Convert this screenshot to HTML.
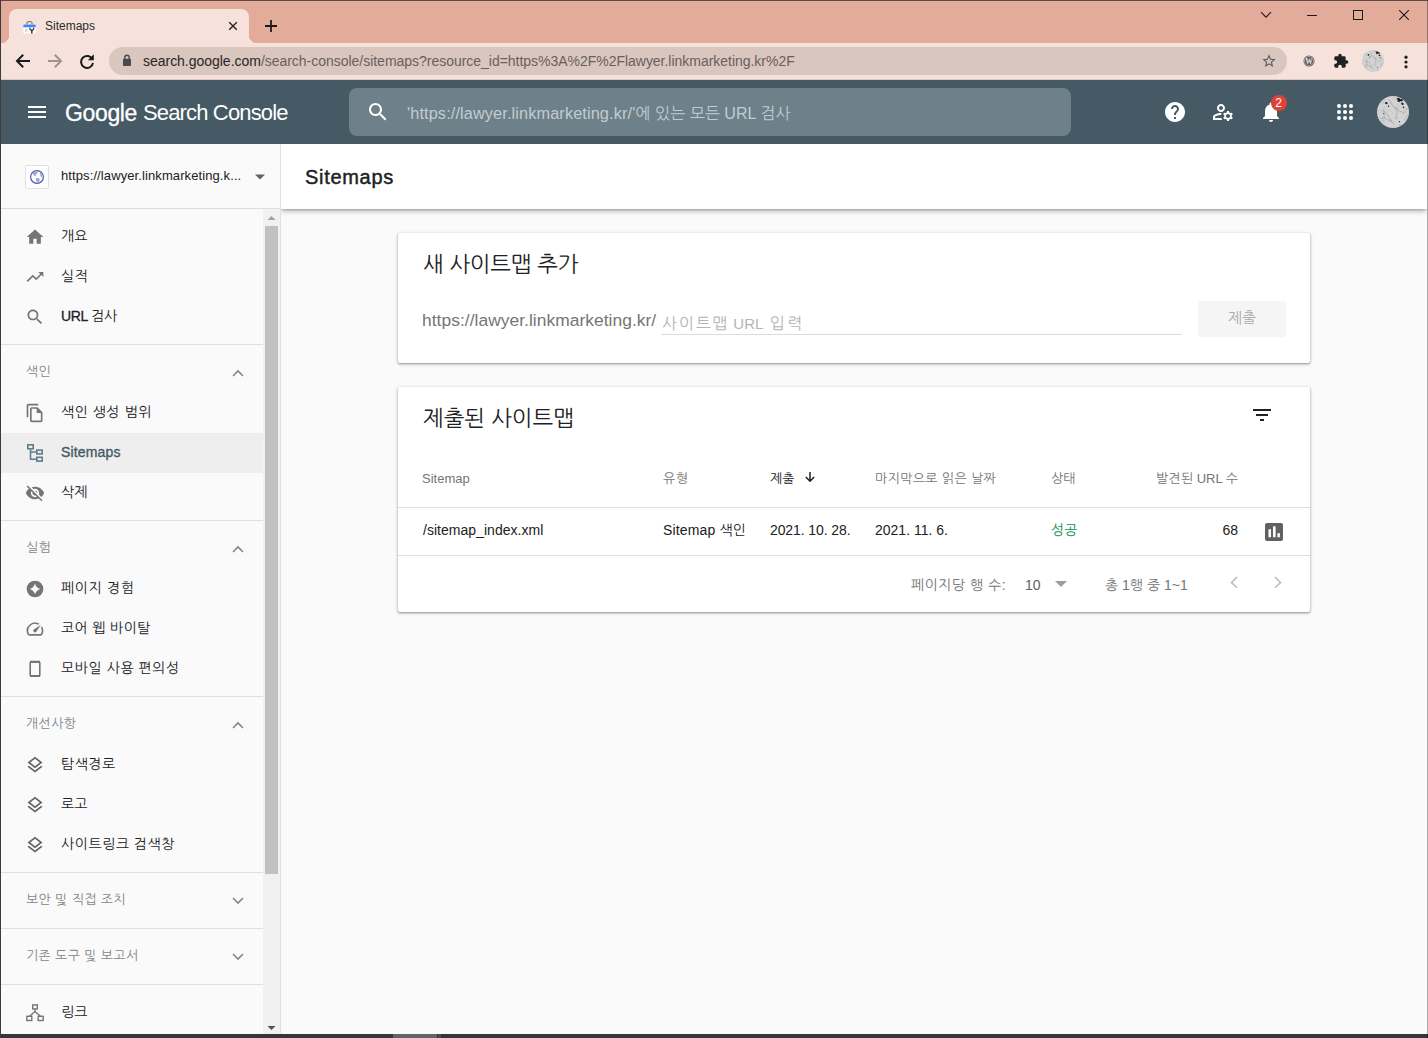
<!DOCTYPE html>
<html lang="ko">
<head>
<meta charset="utf-8">
<title>Sitemaps</title>
<style>
*{box-sizing:border-box;margin:0;padding:0}
html,body{width:1428px;height:1038px;overflow:hidden;background:#fafafa}
body{font-family:"Liberation Sans","NanumGothic","Noto Sans CJK KR",sans-serif;color:#202124;position:relative}
.abs{position:absolute}
svg{display:block}
/* ---------- window chrome ---------- */
#titlebar{left:0;top:0;width:1428px;height:43px;background:#e3ab99}
#tab{left:9px;top:9px;width:240px;height:34px;background:#f6e2db;border-radius:8px 8px 0 0}
#tab:before,#tab:after{content:"";position:absolute;bottom:0;width:8px;height:8px;background:radial-gradient(circle at 0 0,transparent 8px,#f6e2db 8.5px)}
#tab:before{left:-8px}
#tab:after{right:-8px;background:radial-gradient(circle at 100% 0,transparent 8px,#f6e2db 8.5px)}
#tabtitle{left:45px;top:18px;font-size:12px;line-height:16px;color:#2b2b2b}
#toolbar{left:0;top:43px;width:1428px;height:37px;background:#f6e2db}
#omni{left:109px;top:47px;width:1178px;height:28px;border-radius:14px;background:#d8c6bf}
#url{left:143px;top:53px;font-size:14px;line-height:16px;color:#6b5f5c;white-space:nowrap;letter-spacing:-0.025px}
#url b{font-weight:normal;color:#2a2524}
#wtop{left:0;top:0;width:1428px;height:1px;background:#5e4b47}
#wleft{left:0;top:0;width:1px;height:1038px;background:#3c3c3c}
#wright{left:1427px;top:0;width:1px;height:1038px;background:rgba(0,0,0,.32)}
#wbottom{left:0;top:1034px;width:1428px;height:4px;background:#363636}
/* ---------- GSC header ---------- */
#hdr{left:0;top:80px;width:1428px;height:64px;background:#455a64}
#logo{left:65px;top:99px;font-size:22px;line-height:28px;color:#fff;white-space:nowrap}
#search{left:349px;top:88px;width:722px;height:48px;border-radius:8px;background:#6e8089}
#searchtxt{left:407px;top:103px;font-size:16px;line-height:20px;color:#c3ccd0;white-space:nowrap}
/* ---------- sidebar ---------- */
#side{left:1px;top:144px;width:280px;height:889px;background:#fafafa;border-right:1px solid #e0e0e0}
.nav{position:absolute;left:61px;font-size:14px;line-height:20px;color:#202124;white-space:nowrap}
.sec{position:absolute;left:26px;letter-spacing:0.35px;font-size:13px;line-height:20px;color:#80868b;white-space:nowrap}
.hr{position:absolute;left:1px;width:262px;height:1px;background:#e0e0e0}
.ico{position:absolute;left:25px;width:20px;height:20px}
/* ---------- main ---------- */
#ptitle{left:281px;top:144px;width:1146px;height:65px;background:#fff;box-shadow:0 3px 5px -1px rgba(0,0,0,.3),0 1px 2px rgba(0,0,0,.15);clip-path:inset(0 0 -12px 0)}
#ptitle span{position:absolute;left:24px;top:20px;font-size:20px;line-height:26px;color:#202124;-webkit-text-stroke:0.45px #202124;letter-spacing:0.7px}
.card{position:absolute;background:#fff;border-radius:2px;box-shadow:0 1px 2px rgba(0,0,0,.3),0 1px 3px 1px rgba(0,0,0,.12)}
.t{position:absolute;white-space:nowrap}
.th{font-size:13px;line-height:16px;color:#757575;margin-top:1px}
.td{font-size:14px;line-height:20px;color:#212121}
.tf{font-size:14px;line-height:20px;color:#757575}
</style>
</head>
<body>
<!-- window chrome -->
<div id="titlebar" class="abs"></div>
<div id="toolbar" class="abs"></div>
<div class="abs" style="left:0;top:79px;width:1428px;height:1px;background:#d9c9c3"></div>
<div id="tab" class="abs"></div>
<div id="tabtitle" class="abs">Sitemaps</div>
<div id="omni" class="abs"></div>
<div id="url" class="abs"><b>search.google.com</b>/search-console/sitemaps?resource_id=https%3A%2F%2Flawyer.linkmarketing.kr%2F</div>

<!-- chrome icons -->
<svg class="abs" style="left:22.500px;top:20.500px" width="13" height="13" viewBox="0 0 13 13"><path d="M4 3.600v-1.800q0-1.100 1.100-1.100h2.800q1.100 0 1.100 1.100v1.800" fill="none" stroke="#5f6368" stroke-width="1"/><rect x="0.300" y="3.600" width="12.400" height="9" rx="0.800" fill="#fff"/><path d="M0.300 6.200v-1.800q0-.8.800-.8h10.800q.8 0 .8.800v1.800z" fill="#4285f4"/><rect x="2" y="7.300" width="2.600" height="4" fill="#dadce0"/><path d="M6.300 6.600v2l1.700 1.500v2.400h1.600v-2.400l1.700-1.500v-2h-1.200v1.700H7.500V6.600z" fill="#3c4043"/></svg>
<svg class="abs" style="left:227px;top:20.300px" width="12" height="12" viewBox="0 0 12 12"><path d="M2.200 2.200l7.600 7.600M9.800 2.200l-7.600 7.600" stroke="#2b2b2b" stroke-width="1.500" fill="none"/></svg>
<svg class="abs" style="left:264px;top:18.600px" width="14" height="14" viewBox="0 0 14 14"><path d="M7 1v12M1 7h12" stroke="#1b1b1b" stroke-width="1.800" fill="none"/></svg>
<!-- window controls -->
<svg class="abs" style="left:1260px;top:11px" width="12" height="8" viewBox="0 0 12 8"><path d="M1 1.200l5 5 5-5" stroke="#1b1b1b" stroke-width="1.100" fill="none"/></svg>
<div class="abs" style="left:1307px;top:15px;width:10px;height:1px;background:#1b1b1b"></div>
<div class="abs" style="left:1353px;top:10px;width:10px;height:10px;border:1px solid #1b1b1b"></div>
<svg class="abs" style="left:1399px;top:10px" width="10" height="10" viewBox="0 0 10 10"><path d="M0 0l10 10M10 0L0 10" stroke="#1b1b1b" stroke-width="1.100" fill="none"/></svg>
<!-- toolbar nav -->
<svg class="abs" style="left:15px;top:53px" width="16" height="16" viewBox="0 0 16 16"><path d="M15 8H2.500M8.200 1.800L2 8l6.200 6.200" stroke="#1b1b1b" stroke-width="2" fill="none"/></svg>
<svg class="abs" style="left:47px;top:53px" width="16" height="16" viewBox="0 0 16 16"><path d="M1 8h12.500M7.800 1.800L14 8l-6.200 6.200" stroke="#a0928f" stroke-width="2" fill="none"/></svg>
<svg class="abs" style="left:79px;top:53px" width="16" height="16" viewBox="0 0 16 16"><path d="M13.600 6.500A6 6 0 1 0 14 10" stroke="#1b1b1b" stroke-width="2" fill="none"/><path d="M14.800 1.200v6h-6z" fill="#1b1b1b"/></svg>
<svg class="abs" style="left:122px;top:54px" width="10" height="13" viewBox="0 0 10 13"><path d="M2.800 5V3.500a2.200 2.200 0 0 1 4.400 0V5" fill="none" stroke="#4a4a4e" stroke-width="1.400"/><rect x="1" y="4.800" width="8" height="7.200" rx="0.800" fill="#4a4a4e"/></svg>
<svg class="abs" style="left:1261px;top:53px" width="16" height="16" viewBox="0 0 24 24"><path fill="#5a5a5e" d="M22 9.240l-7.190-.62L12 2 9.190 8.630 2 9.240l5.460 4.730L5.820 21 12 17.270 18.180 21l-1.630-7.030L22 9.240zM12 15.400l-3.760 2.270 1-4.280-3.320-2.880 4.380-.38L12 6.100l1.710 4.040 4.380.38-3.320 2.880 1 4.280L12 15.400z"/></svg>
<svg class="abs" style="left:1303px;top:55px" width="12" height="12" viewBox="0 0 12 12"><circle cx="6" cy="6" r="5.500" fill="#5c5c5c"/><circle cx="6" cy="6" r="4.600" fill="none" stroke="#e6dad6" stroke-width="0.500"/><text x="6" y="8.700" font-size="7.500" font-weight="bold" font-family="Liberation Serif,serif" text-anchor="middle" fill="#efe4e0">W</text></svg>
<svg class="abs" style="left:1333px;top:53px" width="16" height="16" viewBox="0 0 24 24"><path fill="#202124" d="M20.500 11H19V7c0-1.100-.9-2-2-2h-4V3.500C13 2.120 11.880 1 10.500 1S8 2.120 8 3.500V5H4c-1.100 0-1.990.9-1.990 2v3.800H3.500c1.490 0 2.700 1.210 2.700 2.700s-1.210 2.700-2.700 2.700H2V20c0 1.100.9 2 2 2h3.800v-1.500c0-1.490 1.210-2.700 2.700-2.700 1.490 0 2.700 1.210 2.700 2.700V22H17c1.100 0 2-.9 2-2v-4h1.500c1.380 0 2.500-1.120 2.500-2.500S21.880 11 20.500 11z"/></svg>
<svg class="abs" style="left:1362px;top:50px" width="22" height="22" viewBox="0 0 32 32"><defs><clipPath id="av1c"><circle cx="16" cy="16" r="16"/></clipPath><filter id="av1f" x="0" y="0" width="100%" height="100%"><feTurbulence type="fractalNoise" baseFrequency="0.22" numOctaves="3" seed="11"/><feColorMatrix type="matrix" values="0 0 0 0 0.45  0 0 0 0 0.45  0 0 0 0 0.45  3.2 3.2 0 0 -3.35"/></filter></defs><g clip-path="url(#av1c)"><rect width="32" height="32" fill="#d3d3d3"/><rect width="32" height="32" filter="url(#av1f)" opacity="0.55"/><path d="M5 14q5 2 7 7t6 8M12 3q2 6 6 9t9 5M3 22q6-1 10 3M20 12q1 6-2 11" fill="none" stroke="#8f8f8f" stroke-width="0.5"/><path d="M19.500 2.500l2.500-.8 1.200 1.500 2-.3.800 1.800-1.700.8-1.300-.5-.8 1.200-1.700-.6.300-1.500zM24.500 6.500l1.800.4.600 1.600-1.500.5-1.200-1zM8 6.500l1.600-.6 1.200 1-.7 1.400-1.700-.2zM11 9.500l1.200.3-.2 1.200-1.200-.2zM26 10.500l1.400.5-.5 1.200-1.200-.5zM22 25l1.200.2-.3 1.100-1.100-.3zM6.500 17l1 .3-.3 1-1-.3z" fill="#1b1b1b"/></g></svg>
<svg class="abs" style="left:1403.500px;top:54.500px" width="4" height="14" viewBox="0 0 4 14"><circle cx="2" cy="2.200" r="1.600" fill="#1b1b1b"/><circle cx="2" cy="7" r="1.600" fill="#1b1b1b"/><circle cx="2" cy="11.800" r="1.600" fill="#1b1b1b"/></svg>

<!-- GSC header -->
<div id="hdr" class="abs"></div>
<div id="logo" class="abs"><span id="lg1" style="font-size:23px;letter-spacing:-0.35px;-webkit-text-stroke:0.3px #fff">Google</span><span id="lg2" style="position:absolute;left:78px;top:0;letter-spacing:-0.85px">Search Console</span></div>
<div id="search" class="abs"></div>
<div id="searchtxt" class="abs"><span style="font-size:16.300px;letter-spacing:0.12px">'https://lawyer.linkmarketing.kr/'</span><span style="letter-spacing:0.05px">에 있는 모든 URL 검사</span></div>

<!-- header icons -->
<svg class="abs" style="left:25px;top:100px" width="24" height="24" viewBox="0 0 24 24"><path fill="#fff" d="M3 18h18v-2H3v2zm0-5h18v-2H3v2zm0-7v2h18V6H3z"/></svg>
<svg class="abs" style="left:366px;top:100px" width="24" height="24" viewBox="0 0 24 24"><path fill="#fff" d="M15.500 14h-.79l-.28-.27C15.410 12.590 16 11.110 16 9.500 16 5.910 13.090 3 9.500 3S3 5.910 3 9.500 5.910 16 9.500 16c1.610 0 3.090-.59 4.230-1.570l.27.28v.79l5 4.990L20.490 19l-4.990-5zm-6 0C7.010 14 5 11.990 5 9.500S7.010 5 9.500 5 14 7.010 14 9.500 11.990 14 9.500 14z"/></svg>
<svg class="abs" style="left:1163px;top:100px" width="24" height="24" viewBox="0 0 24 24"><path fill="#fff" d="M12 2C6.480 2 2 6.480 2 12s4.480 10 10 10 10-4.480 10-10S17.520 2 12 2zm1 17h-2v-2h2v2zm2.070-7.750l-.9.920C13.450 12.900 13 13.500 13 15h-2v-.5c0-1.100.45-2.100 1.170-2.830l1.240-1.260c.37-.36.590-.86.590-1.410 0-1.100-.9-2-2-2s-2 .9-2 2H8c0-2.210 1.790-4 4-4s4 1.790 4 4c0 .88-.36 1.680-.93 2.250z"/></svg>
<svg class="abs" style="left:1211px;top:100px" width="24" height="24" viewBox="0 0 24 24"><path fill="#fff" d="M4 18v-.65c0-.34.16-.66.41-.81C6.100 15.530 8.030 15 10 15c.03 0 .05 0 .08.010.1-.7.3-1.370.59-1.980-.22-.02-.44-.03-.67-.03-2.420 0-4.680.67-6.610 1.820-.88.52-1.390 1.500-1.390 2.530V20h9.260c-.42-.6-.75-1.280-.97-2H4zM10 12c2.210 0 4-1.790 4-4s-1.790-4-4-4-4 1.790-4 4 1.790 4 4 4zm0-6c1.100 0 2 .9 2 2s-.9 2-2 2-2-.9-2-2 .9-2 2-2zM20.750 16c0-.22-.03-.42-.06-.63l1.140-1.010-1-1.730-1.450.49c-.32-.27-.68-.48-1.080-.63L18 11h-2l-.3 1.490c-.4.15-.76.36-1.080.63l-1.450-.49-1 1.730 1.140 1.010c-.03.21-.06.41-.06.63s.03.42.06.63l-1.140 1.010 1 1.730 1.450-.49c.32.27.68.48 1.080.63L16 21h2l.3-1.490c.4-.15.76-.36 1.080-.63l1.450.49 1-1.730-1.140-1.010c.03-.21.06-.41.06-.63zM17 18c-1.100 0-2-.9-2-2s.9-2 2-2 2 .9 2 2-.9 2-2 2z"/></svg>
<svg class="abs" style="left:1259px;top:100px" width="24" height="24" viewBox="0 0 24 24"><path fill="#fff" d="M12 22c1.100 0 2-.9 2-2h-4c0 1.100.89 2 2 2zm6-6v-5c0-3.070-1.640-5.640-4.500-6.320V4c0-.83-.67-1.500-1.500-1.500s-1.500.67-1.500 1.500v.68C7.630 5.360 6 7.920 6 11v5l-2 2v1h16v-1l-2-2z"/></svg>
<div class="abs" style="left:1270.500px;top:95px;width:16px;height:16px;border-radius:50%;background:#db4437;color:#fff;font-size:12px;line-height:16px;text-align:center">2</div>
<svg class="abs" style="left:1336px;top:103px" width="18" height="18" viewBox="0 0 18 18" fill="#fff"><circle cx="3" cy="3" r="2.050"/><circle cx="9" cy="3" r="2.050"/><circle cx="15" cy="3" r="2.050"/><circle cx="3" cy="9" r="2.050"/><circle cx="9" cy="9" r="2.050"/><circle cx="15" cy="9" r="2.050"/><circle cx="3" cy="15" r="2.050"/><circle cx="9" cy="15" r="2.050"/><circle cx="15" cy="15" r="2.050"/></svg>
<svg class="abs" style="left:1377px;top:96px" width="32" height="32" viewBox="0 0 32 32"><defs><clipPath id="av2c"><circle cx="16" cy="16" r="16"/></clipPath><filter id="av2f" x="0" y="0" width="100%" height="100%"><feTurbulence type="fractalNoise" baseFrequency="0.22" numOctaves="3" seed="11"/><feColorMatrix type="matrix" values="0 0 0 0 0.45  0 0 0 0 0.45  0 0 0 0 0.45  3.2 3.2 0 0 -3.35"/></filter></defs><g clip-path="url(#av2c)"><rect width="32" height="32" fill="#d3d3d3"/><rect width="32" height="32" filter="url(#av2f)" opacity="0.55"/><path d="M5 14q5 2 7 7t6 8M12 3q2 6 6 9t9 5M3 22q6-1 10 3M20 12q1 6-2 11" fill="none" stroke="#8f8f8f" stroke-width="0.5"/><path d="M19.500 2.500l2.500-.8 1.200 1.500 2-.3.800 1.800-1.700.8-1.300-.5-.8 1.200-1.700-.6.300-1.500zM24.500 6.500l1.800.4.600 1.600-1.500.5-1.200-1zM8 6.500l1.600-.6 1.200 1-.7 1.400-1.700-.2zM11 9.500l1.200.3-.2 1.200-1.200-.2zM26 10.500l1.400.5-.5 1.200-1.200-.5zM22 25l1.200.2-.3 1.100-1.100-.3zM6.500 17l1 .3-.3 1-1-.3z" fill="#1b1b1b"/></g></svg>

<!-- sidebar -->
<div id="side" class="abs"></div>
<div class="abs" style="left:1px;top:208px;width:280px;height:1px;background:#dcdcdc"></div>
<div class="abs" id="sel" style="left:1px;top:433px;width:262px;height:40px;background:#eeeeee"></div>
<!-- property selector -->
<div class="abs" style="left:25px;top:165px;width:24px;height:24px;background:#fff;border:1px solid #e0e0e0;border-radius:2px"></div>
<svg class="abs" style="left:29px;top:169px" width="16" height="16" viewBox="0 0 16 16"><circle cx="8" cy="8" r="6.400" fill="#fff" stroke="#4c5bb3" stroke-width="1.200"/><path d="M3.600 4.200l2-1.800 3-.3.200 1.800-1.700 1.300-.2 1.700-1.500-.2-1.300-1.300zM6.800 8.800l3.200.4 1 1.400-1.200 2.300-1.800.9-.8-2.200zM11 3.600l1.900 2.200.2 2.600-1.200-.6-1-2z" fill="#9fa9da"/></svg>
<div class="nav" style="top:166px;color:#202124;font-size:13px;letter-spacing:0.1px">https://lawyer.linkmarketing.k...</div>
<svg class="abs" style="left:254px;top:174px" width="12" height="6" viewBox="0 0 12 6"><path d="M1 0.500h10L6 5.500z" fill="#5f6368"/></svg>
<!-- scrollbar -->
<div class="abs" style="left:263px;top:209px;width:17px;height:825px;background:#f1f1f1"></div>
<div class="abs" style="left:265px;top:226px;width:13px;height:648px;background:#c1c1c1"></div>
<svg class="abs" style="left:267px;top:216px" width="9" height="4" viewBox="0 0 9 4"><path d="M0.500 4L4.500 0 8.500 4z" fill="#a3a3a3"/></svg>
<svg class="abs" style="left:267px;top:1026px" width="9" height="4" viewBox="0 0 9 4"><path d="M0.500 0L4.500 4 8.500 0z" fill="#505050"/></svg>
<!-- dividers -->
<div class="hr" style="top:344px"></div>
<div class="hr" style="top:520px"></div>
<div class="hr" style="top:696px"></div>
<div class="hr" style="top:872px"></div>
<div class="hr" style="top:928px"></div>
<div class="hr" style="top:984px"></div>
<!-- nav labels -->
<div class="nav" style="top:226px">개요</div>
<div class="nav" style="top:266px;letter-spacing:0.9px">실적</div>
<div class="nav" style="top:306px;letter-spacing:-0.3px"><span style="-webkit-text-stroke:0.3px #202124">URL</span> 검사</div>
<div class="sec" style="top:362px">색인</div>
<div class="nav" style="top:402px;letter-spacing:0.5px">색인 생성 범위</div>
<div class="nav" style="top:442px;color:#455a64;-webkit-text-stroke:0.35px #455a64;letter-spacing:0.15px" id="navsel">Sitemaps</div>
<div class="nav" style="top:482px;letter-spacing:0.3px">삭제</div>
<div class="sec" style="top:538px">실험</div>
<div class="nav" style="top:578px;letter-spacing:0.67px">페이지 경험</div>
<div class="nav" style="top:618px;letter-spacing:0.37px">코어 웹 바이탈</div>
<div class="nav" style="top:658px;letter-spacing:0.57px">모바일 사용 편의성</div>
<div class="sec" style="top:714px">개선사항</div>
<div class="nav" style="top:754px;letter-spacing:0.5px">탐색경로</div>
<div class="nav" style="top:794px">로고</div>
<div class="nav" style="top:834px;letter-spacing:0.53px">사이트링크 검색창</div>
<div class="sec" style="top:890px">보안 및 직접 조치</div>
<div class="sec" style="top:946px">기존 도구 및 보고서</div>
<div class="nav" style="top:1002px">링크</div>
<!-- chevrons -->
<svg class="abs chev" style="left:232px;top:369px" width="12" height="8" viewBox="0 0 12 8"><path d="M1 7l5-5 5 5" fill="none" stroke="#80868b" stroke-width="1.600"/></svg>
<svg class="abs chev" style="left:232px;top:545px" width="12" height="8" viewBox="0 0 12 8"><path d="M1 7l5-5 5 5" fill="none" stroke="#80868b" stroke-width="1.600"/></svg>
<svg class="abs chev" style="left:232px;top:721px" width="12" height="8" viewBox="0 0 12 8"><path d="M1 7l5-5 5 5" fill="none" stroke="#80868b" stroke-width="1.600"/></svg>
<svg class="abs chev" style="left:232px;top:897px" width="12" height="8" viewBox="0 0 12 8"><path d="M1 1l5 5 5-5" fill="none" stroke="#80868b" stroke-width="1.600"/></svg>
<svg class="abs chev" style="left:232px;top:953px" width="12" height="8" viewBox="0 0 12 8"><path d="M1 1l5 5 5-5" fill="none" stroke="#80868b" stroke-width="1.600"/></svg>
<!-- nav icons -->
<svg class="ico" style="top:227px" viewBox="0 0 24 24"><path fill="#757575" d="M10 20v-6h4v6h5v-8h3L12 3 2 12h3v8z"/></svg>
<svg class="ico" style="top:267px" viewBox="0 0 24 24"><path fill="#757575" d="M16 6l2.290 2.290-4.880 4.880-4-4L2 16.590 3.410 18l6-6 4 4 6.300-6.290L22 12V6z"/></svg>
<svg class="ico" style="top:307px" viewBox="0 0 24 24"><path fill="#757575" d="M15.500 14h-.79l-.28-.27C15.410 12.590 16 11.110 16 9.500 16 5.910 13.090 3 9.500 3S3 5.910 3 9.500 5.910 16 9.500 16c1.610 0 3.090-.59 4.230-1.570l.27.28v.79l5 4.990L20.490 19l-4.990-5zm-6 0C7.010 14 5 11.990 5 9.500S7.010 5 9.500 5 14 7.010 14 9.500 11.990 14 9.500 14z"/></svg>
<svg class="ico" style="top:403px" viewBox="0 0 24 24"><path fill="#757575" d="M16 1H4c-1.100 0-2 .9-2 2v14h2V3h12V1zm-1 4H8c-1.100 0-1.990.9-1.990 2L6 21c0 1.100.89 2 1.990 2H19c1.100 0 2-.9 2-2V11l-6-6zM8 21V7h6v5h5v9H8z"/></svg>
<svg class="abs" style="left:25px;top:442px" width="20" height="22" viewBox="0 0 20 22"><g fill="none" stroke="#607d8b" stroke-width="1.600"><rect x="2.800" y="2.800" width="5.400" height="4"/><rect x="11.800" y="8.100" width="5.400" height="3.800"/><rect x="11.800" y="15.300" width="5.400" height="3.800"/><path d="M5.500 7.500v9.700h6M5.500 10h6"/></g></svg>
<svg class="ico" style="top:483px" viewBox="0 0 24 24"><path fill="#757575" d="M12 7c2.760 0 5 2.240 5 5 0 .65-.13 1.260-.36 1.830l2.920 2.920c1.510-1.260 2.700-2.890 3.430-4.750-1.730-4.390-6-7.500-11-7.500-1.400 0-2.740.25-3.980.7l2.160 2.160C10.740 7.130 11.350 7 12 7zM2 4.270l2.280 2.280.46.460C3.080 8.300 1.780 10.020 1 12c1.730 4.390 6 7.500 11 7.500 1.550 0 3.030-.3 4.380-.84l.42.42L19.730 22 21 20.730 3.270 3 2 4.270zM7.530 9.800l1.550 1.550c-.05.21-.08.43-.08.65 0 1.660 1.340 3 3 3 .22 0 .44-.03.65-.08l1.550 1.550c-.67.33-1.410.53-2.200.53-2.760 0-5-2.240-5-5 0-.79.2-1.530.53-2.200zm4.310-.78l3.150 3.150.02-.16c0-1.660-1.340-3-3-3l-.17.010z"/></svg>
<svg class="ico" style="top:579px" viewBox="0 0 24 24"><path fill="#757575" fill-rule="evenodd" d="M12 2a10 10 0 100 20 10 10 0 000-20zm0 3.600Q13.500 10.500 18.400 12 13.500 13.500 12 18.400 10.500 13.500 5.600 12 10.500 10.500 12 5.600z"/></svg>
<svg class="ico" style="top:619px" viewBox="0 0 24 24"><path fill="#757575" d="M20.380 8.570l-1.230 1.850a8 8 0 01-.22 7.580H5.070A8 8 0 0115.580 6.850l1.850-1.230A10 10 0 003.350 19a2 2 0 001.720 1h13.850a2 2 0 001.740-1 10 10 0 00-.27-10.440zm-9.790 6.840a2 2 0 002.830 0l5.660-8.490-8.490 5.660a2 2 0 000 2.830z"/></svg>
<svg class="abs" style="left:25px;top:659px" width="20" height="20" viewBox="0 0 20 20"><rect x="5.200" y="2.800" width="9.600" height="14.400" rx="1.200" fill="none" stroke="#757575" stroke-width="1.600"/><path d="M5 2.800h10M5 17h10" stroke="#757575" stroke-width="2.200"/></svg>
<svg class="ico" style="top:755px" viewBox="0 0 24 24"><path fill="#616161" d="M11.990 18.540l-7.370-5.730L3 14.070l9 7 9-7-1.630-1.270-7.380 5.740zM12 16l7.360-5.730L21 9l-9-7-9 7 1.630 1.270L12 16zm0-11.470L17.740 9 12 13.470 6.260 9 12 4.530z"/></svg>
<svg class="ico" style="top:795px" viewBox="0 0 24 24"><path fill="#616161" d="M11.990 18.540l-7.370-5.730L3 14.070l9 7 9-7-1.630-1.270-7.380 5.740zM12 16l7.360-5.730L21 9l-9-7-9 7 1.630 1.270L12 16zm0-11.470L17.740 9 12 13.470 6.260 9 12 4.530z"/></svg>
<svg class="ico" style="top:835px" viewBox="0 0 24 24"><path fill="#616161" d="M11.990 18.540l-7.370-5.730L3 14.070l9 7 9-7-1.630-1.270-7.380 5.740zM12 16l7.360-5.730L21 9l-9-7-9 7 1.630 1.270L12 16zm0-11.470L17.740 9 12 13.470 6.260 9 12 4.530z"/></svg>
<svg class="abs" style="left:25px;top:1003px" width="20" height="20" viewBox="0 0 20 20"><g fill="none" stroke="#757575" stroke-width="1.400"><rect x="7.700" y="1.900" width="4.600" height="4"/><rect x="1.800" y="13.300" width="5" height="4.200"/><rect x="13.200" y="13.300" width="5" height="4.200"/><path d="M10 6v2.500M10 8.500l-5.500 4.800M10 8.500l5.500 4.800"/></g></svg>

<!-- main -->
<div id="ptitle" class="abs"><span>Sitemaps</span></div>
<div class="card" id="card1" style="left:398px;top:233px;width:912px;height:130px"></div>
<div class="card" id="card2" style="left:398px;top:387px;width:912px;height:225px"></div>

<!-- card 1 -->
<div class="t" id="c1t" style="left:423px;top:251px;font-size:22px;line-height:28px;color:#202124;letter-spacing:-0.2px">새 사이트맵 추가</div>
<div class="t" id="c1u" style="left:422px;top:309px;font-size:17.400px;line-height:22px;color:#757575;letter-spacing:0.04px">https://lawyer.linkmarketing.kr/</div>
<div class="t" id="c1p" style="left:662px;top:314px;font-size:16px;line-height:20px;color:#b4b4b4;letter-spacing:1.8px">사이트맵<span style="letter-spacing:0;margin:0 2px 0 -0.500px"> <span style="font-size:15px">URL</span> </span><span style="letter-spacing:2.5px">입력</span></div>
<div class="abs" style="left:661px;top:334px;width:521px;height:1px;background:#dcdcdc"></div>
<div class="abs" style="left:1198px;top:301px;width:88px;height:36px;border-radius:4px;background:#f5f5f5"></div>
<div class="t" id="c1b" style="left:1198px;top:308px;width:88px;text-align:center;font-size:15px;line-height:20px;color:#ababab">제출</div>
<!-- card 2 -->
<div class="t" id="c2t" style="left:423px;top:405px;font-size:22px;line-height:28px;color:#202124">제출된 사이트맵</div>
<svg class="abs" style="left:1253px;top:409px" width="18" height="12" viewBox="0 0 18 12"><path fill="#212121" d="M0 0h18v2H0zM3 5h12v2H3zM7 10h4v2H7z"/></svg>
<div class="t th" id="h1" style="left:422px;top:470px">Sitemap</div>
<div class="t th" id="h2" style="left:663px;top:470px;letter-spacing:0.6px">유형</div>
<div class="t th" id="h3" style="left:770px;top:470px;color:#212121">제출</div>
<svg class="abs" style="left:804px;top:471px" width="12" height="12" viewBox="0 0 12 12"><path d="M6 1v9M1.800 6L6 10.200 10.200 6" fill="none" stroke="#212121" stroke-width="1.500"/></svg>
<div class="t th" id="h4" style="left:875px;top:470px;letter-spacing:0.36px">마지막으로 읽은 날짜</div>
<div class="t th" id="h5" style="left:1051px;top:470px">상태</div>
<div class="t th" id="h6" style="right:190px;top:470px">발견된 URL 수</div>
<div class="abs" style="left:398px;top:507px;width:912px;height:1px;background:#e0e0e0"></div>
<div class="t td" id="d1" style="left:423px;top:520px;letter-spacing:0.03px">/sitemap_index.xml</div>
<div class="t td" id="d2" style="left:663px;top:520px;letter-spacing:0.15px">Sitemap 색인</div>
<div class="t td" id="d3" style="left:770px;top:520px;letter-spacing:-0.1px">2021. 10. 28.</div>
<div class="t td" id="d4" style="left:875px;top:520px">2021. 11. 6.</div>
<div class="t td" id="d5" style="left:1051px;top:520px;color:#0d904f">성공</div>
<div class="t td" id="d6" style="right:190px;top:520px">68</div>
<svg class="abs" style="left:1265px;top:523px" width="18" height="18" viewBox="0 0 18 18"><rect width="18" height="18" rx="2" fill="#616161"/><path fill="#fff" d="M3.500 6.300h2.500v8H3.500zM8 3.200h2.600v11.100H8zM12.400 10.200h2.500v4.100h-2.500z"/></svg>
<div class="abs" style="left:398px;top:555px;width:912px;height:1px;background:#e0e0e0"></div>
<div class="t tf" id="f1" style="left:911px;top:575px;letter-spacing:0.5px">페이지당 행 수:</div>
<div class="t tf" id="f2" style="left:1025px;top:575px;color:#616161">10</div>
<svg class="abs" style="left:1055px;top:581px" width="12" height="6" viewBox="0 0 12 6"><path d="M0 0h12L6 6z" fill="#9e9e9e"/></svg>
<div class="t tf" id="f3" style="left:1105px;top:575px">총 1행 중 1~1</div>
<svg class="abs" style="left:1229px;top:576px" width="10" height="12" viewBox="0 0 10 12"><path d="M8 1.200L2.500 6.500 8 11.800" fill="none" stroke="#bdbdbd" stroke-width="1.600"/></svg>
<svg class="abs" style="left:1273.400px;top:576px" width="10" height="12" viewBox="0 0 10 12"><path d="M2 1.200l5.500 5.300L2 11.800" fill="none" stroke="#bdbdbd" stroke-width="1.600"/></svg>

<!-- window borders -->
<div id="wbottom" class="abs"></div>
<div class="abs" style="left:393px;top:1034px;width:44px;height:4px;background:#646464"></div>
<div class="abs" style="left:438px;top:1034px;width:3px;height:4px;background:#4a4a4a"></div>
<div id="wtop" class="abs"></div>
<div id="wleft" class="abs"></div>
<div id="wright" class="abs"></div>
</body>
</html>
